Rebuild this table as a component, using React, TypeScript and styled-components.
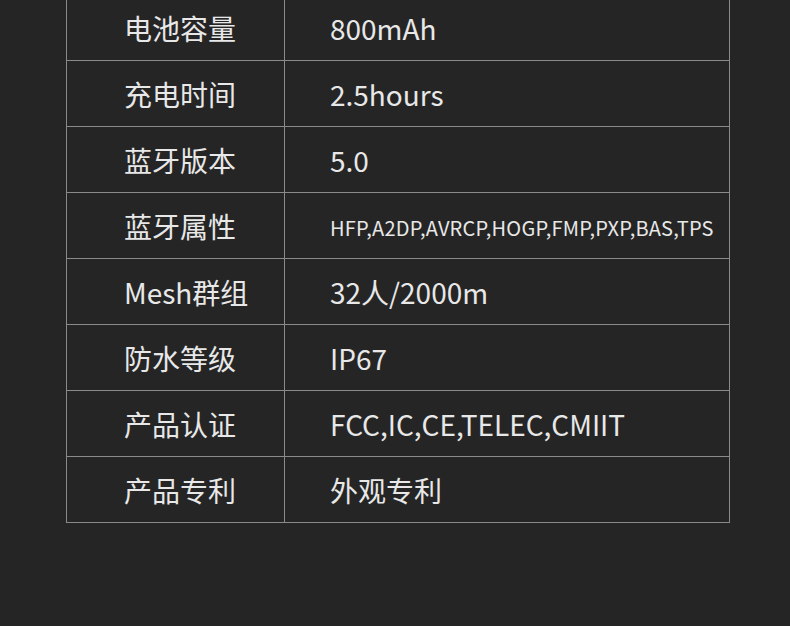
import React from "react";
import styled, { createGlobalStyle } from "styled-components";

const GlobalStyle = createGlobalStyle`
  html, body {
    margin: 0;
    padding: 0;
    background: #252525;
  }
  body {
    font-family: "Noto Sans CJK SC", "Noto Sans", sans-serif;
    color: #e8e8e8;
  }
`;

const Page = styled.div`
  width: 790px;
  height: 626px;
  overflow: hidden;
  background: #252525;
`;

const Table = styled.div`
  box-sizing: border-box;
  margin: -6px 0 0 66px;
  width: 664px;
  border: 1px solid #8a8a8a;
`;

const Row = styled.div`
  display: grid;
  grid-template-columns: 218px 1fr;
  height: 66px;
  box-sizing: border-box;
  border-bottom: 1px solid #8a8a8a;

  &:last-child {
    border-bottom: none;
    height: 65px;
  }
`;

const Label = styled.div`
  box-sizing: border-box;
  display: flex;
  align-items: center;
  padding: 1px 0 0 57px;
  border-right: 1px solid #8a8a8a;
  font-size: 28px;
`;

const Value = styled.div<{ small?: boolean }>`
  display: flex;
  align-items: center;
  padding: ${({ small }) => (small ? "3px" : "1px")} 0 0 45px;
  font-size: ${({ small }) => (small ? "20px" : "28px")};
  letter-spacing: ${({ small }) => (small ? "0.2px" : "0")};
`;

const specs: { label: string; value: string; small?: boolean }[] = [
  { label: "电池容量", value: "800mAh" },
  { label: "充电时间", value: "2.5hours" },
  { label: "蓝牙版本", value: "5.0" },
  { label: "蓝牙属性", value: "HFP,A2DP,AVRCP,HOGP,FMP,PXP,BAS,TPS", small: true },
  { label: "Mesh群组", value: "32人/2000m" },
  { label: "防水等级", value: "IP67" },
  { label: "产品认证", value: "FCC,IC,CE,TELEC,CMIIT" },
  { label: "产品专利", value: "外观专利" },
];

export default function App() {
  return (
    <Page>
      <GlobalStyle />
      <Table>
        {specs.map((s) => (
          <Row key={s.label}>
            <Label>{s.label}</Label>
            <Value small={s.small}>{s.value}</Value>
          </Row>
        ))}
      </Table>
    </Page>
  );
}
